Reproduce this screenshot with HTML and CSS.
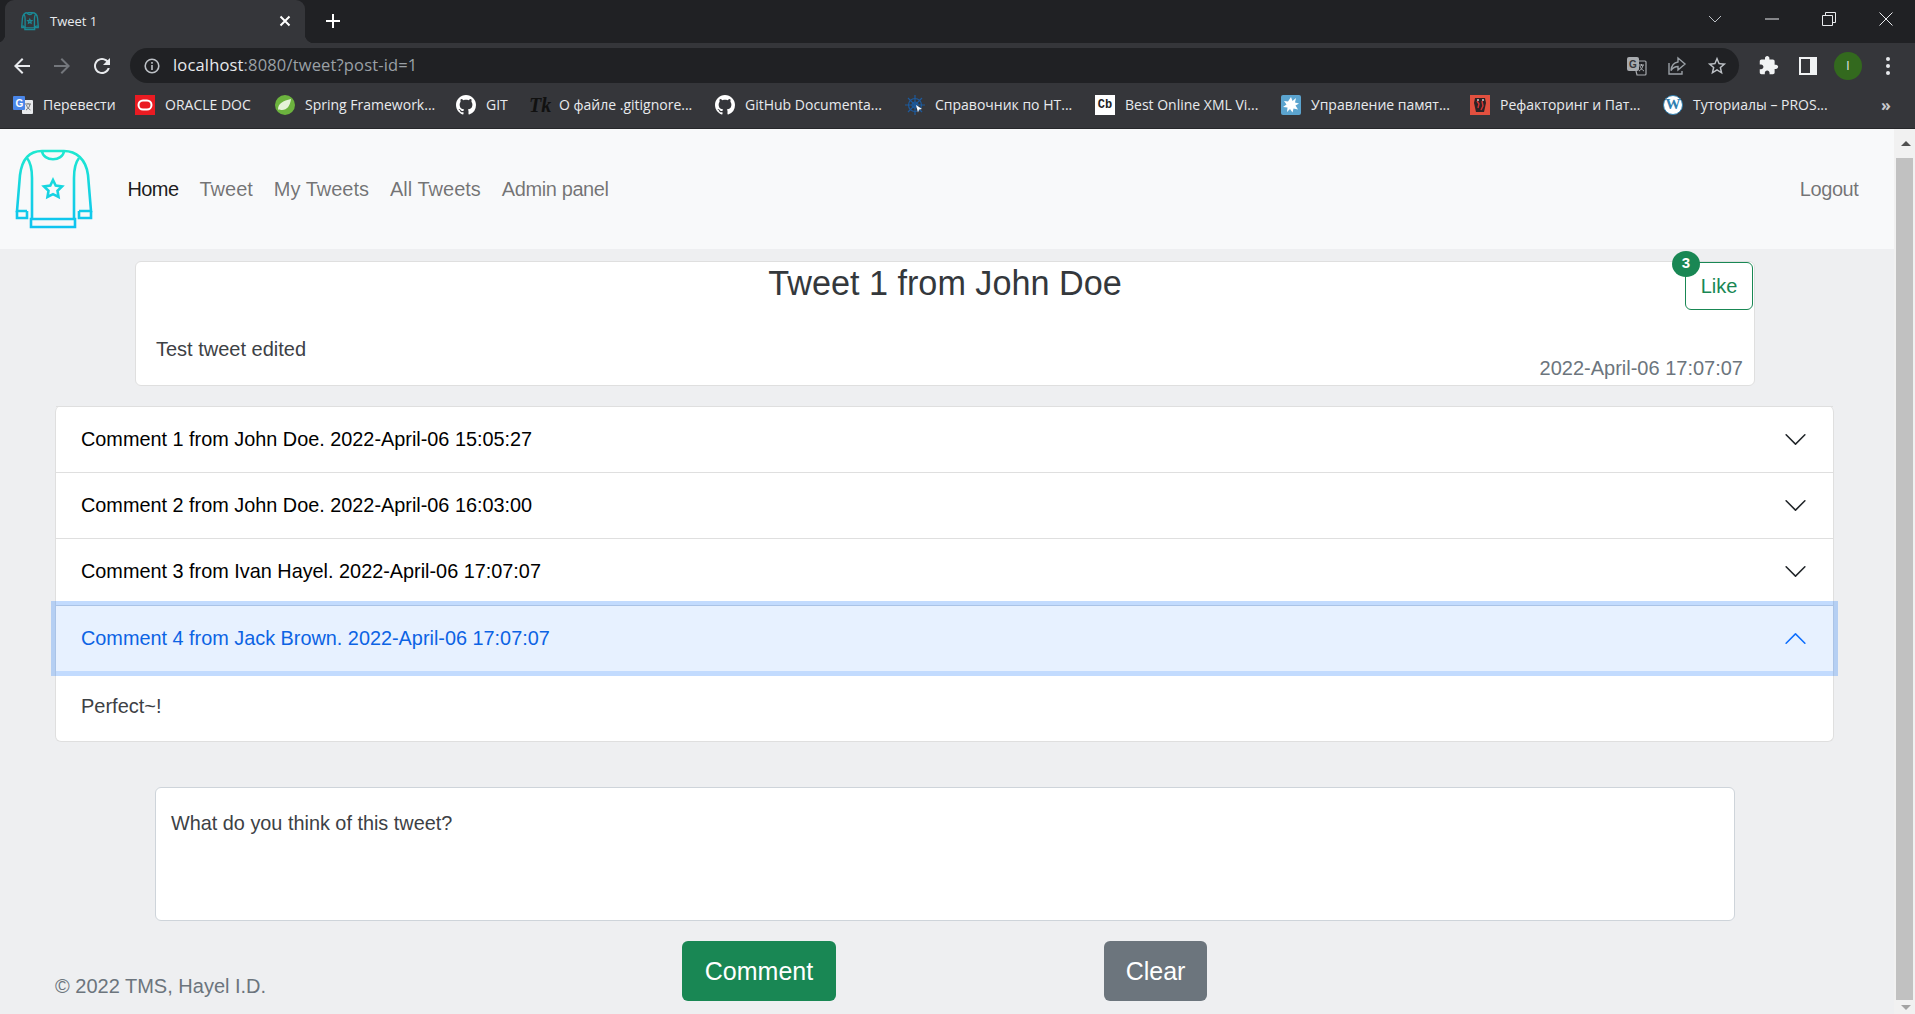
FILE: index.html
```html
<!DOCTYPE html>
<html lang="en">
<head>
    <meta charset="UTF-8">
    <title>Tweet 1</title>
    <link rel="stylesheet" href="styles.css">
</head>
<body>
    <svg class="defs" width="0" height="0">
        <symbol id="github" viewBox="0 0 16 16"><path fill="#fff" d="M8 0C3.58 0 0 3.58 0 8c0 3.54 2.29 6.53 5.47 7.59.4.07.55-.17.55-.38 0-.19-.01-.82-.01-1.49-2.01.37-2.53-.49-2.69-.94-.09-.23-.48-.94-.82-1.13-.28-.15-.68-.52-.01-.53.63-.01 1.08.58 1.23.82.72 1.21 1.87.87 2.33.66.07-.52.28-.87.51-1.07-1.78-.2-3.64-.89-3.64-3.95 0-.87.31-1.59.82-2.15-.08-.2-.36-1.02.08-2.12 0 0 .67-.21 2.2.82.64-.18 1.32-.27 2-.27.68 0 1.36.09 2 .27 1.53-1.04 2.2-.82 2.2-.82.44 1.1.16 1.92.08 2.12.51.56.82 1.27.82 2.15 0 3.07-1.87 3.75-3.65 3.95.29.25.54.73.54 1.48 0 1.07-.01 1.93-.01 2.2 0 .21.15.46.55.38A8.013 8.013 0 0016 8c0-4.42-3.58-8-8-8z"/></symbol>
        <symbol id="chevron" viewBox="0 0 16 16"><path fill-rule="evenodd" d="M1.646 4.646a.5.5 0 0 1 .708 0L8 10.293l5.646-5.647a.5.5 0 0 1 .708.708l-6 6a.5.5 0 0 1-.708 0l-6-6a.5.5 0 0 1 0-.708z"/></symbol>
        <symbol id="sweater" viewBox="0 0 90 90">
            <path d="M33 8h22c12 0 22 8 24 24l3 36H70"/>
            <path d="M33 8c-12 0-20 8-22 24L8 68h10"/>
            <path d="M33 8c1 11 21 11 22 0"/>
            <path d="M18 15c4 5 5 12 5 20v41M70 15c-4 5-5 12-5 20v41"/>
            <path d="M8 68v7h10v-7M70 68v7h12v-7"/>
            <path d="M22 76h44v8H22z"/>
            <path d="M44 37l2.700 5.600 6.300.9-4.500 4.300 1 6.200-5.500-2.900-5.500 2.900 1-6.200-4.500-4.300 6.300-.9z"/>
        </symbol>
        <linearGradient id="logoGrad" gradientUnits="userSpaceOnUse" x1="0" y1="8" x2="0" y2="84">
            <stop offset="0" stop-color="#1ee8d0"/>
            <stop offset="1" stop-color="#0fc3f0"/>
        </linearGradient>
    </svg>

    <!-- browser chrome -->
    <div class="tabstrip">
        <div class="tab">
            <svg class="favicon" width="20" height="20"><use href="#sweater"/></svg>
            <span class="tab-title">Tweet 1</span>
            <svg class="tab-close" width="12" height="12" viewBox="0 0 12 12" stroke="#fff" stroke-width="2"><path d="M1.5 1.5l9 9M10.500 1.5l-9 9"/></svg>
        </div>
        <svg class="new-tab" width="16" height="16" viewBox="0 0 16 16" stroke="#fff" stroke-width="2"><path d="M8 1v14M1 8h14"/></svg>
        <div class="win-controls">
            <span class="win-btn"><svg width="14" height="8" viewBox="0 0 14 8" fill="none" stroke="#bdc1c6"><path d="M1 1l6 6 6-6"/></svg></span>
            <span class="win-btn"><svg width="14" height="2" viewBox="0 0 14 2" stroke="#e8eaed"><path d="M0 1h14"/></svg></span>
            <span class="win-btn"><svg width="14" height="14" viewBox="0 0 14 14" fill="none" stroke="#e8eaed"><path d="M.5 3.5h10v10H.5zM3.5 3V.5h10v10H11"/></svg></span>
            <span class="win-btn"><svg width="14" height="14" viewBox="0 0 14 14" stroke="#e8eaed"><path d="M.5.5l13 13M13.500.5l-13 13"/></svg></span>
        </div>
    </div>

    <div class="toolbar">
        <span class="tool"><svg width="24" height="24" viewBox="0 0 24 24" fill="#e8eaed"><path d="M20 11H7.830l5.590-5.590L12 4l-8 8 8 8 1.410-1.410L7.830 13H20v-2z"/></svg></span>
        <span class="tool"><svg width="24" height="24" viewBox="0 0 24 24" fill="#74777c"><path d="M12 4l-1.410 1.410L16.170 11H4v2h12.170l-5.580 5.590L12 20l8-8z"/></svg></span>
        <span class="tool"><svg width="24" height="24" viewBox="0 0 24 24" fill="#e8eaed"><path d="M17.65 6.35C16.2 4.9 14.21 4 12 4c-4.42 0-7.99 3.58-7.99 8s3.57 8 7.99 8c3.73 0 6.84-2.55 7.73-6h-2.08c-.82 2.33-3.04 4-5.65 4-3.31 0-6-2.69-6-6s2.69-6 6-6c1.66 0 3.14.69 4.22 1.78L13 11h7V4l-2.35 2.35z"/></svg></span>
        <div class="omnibox">
            <svg class="omni-info" width="16" height="16" viewBox="0 0 16 16" fill="none" stroke="#bdc1c6" stroke-width="1.6"><circle cx="8" cy="8" r="6.8"/><path d="M8 7v5M8 4v1.8"/></svg>
            <span class="url">localhost<span class="url-rest">:8080/tweet?post-id=1</span></span>
            <span class="omni-actions">
                <span class="tool"><svg width="20" height="20" viewBox="0 0 20 20"><rect x="0" y="1" width="12" height="14" rx="2" fill="#a8abaf"/><path fill="none" stroke="#a8abaf" stroke-width="1.2" d="M12 5h6a1 1 0 0 1 1 1v12a1 1 0 0 1-1 1h-8l-1-4"/><text x="2" y="12" class="g-mark">G</text><path stroke="#a8abaf" fill="none" d="M12 9h5M14.5 8v2M16 9c-.5 3-2 5-4 6M13 10c.5 2 2 4 4 5"/></svg></span>
                <span class="tool"><svg width="20" height="20" viewBox="0 0 20 20" fill="none" stroke="#9aa0a6" stroke-width="1.4"><path d="M2 7v11h13v-3"/><path d="M11 2l7 6-7 6v-3.500c-3 0-5 1-7 4 .5-5 3-8 7-8.500z"/></svg></span>
                <span class="tool"><svg width="22" height="22" viewBox="0 0 24 24" fill="#bdc1c6"><path d="M22 9.24l-7.19-.62L12 2 9.19 8.63 2 9.24l5.46 4.73L5.82 21 12 17.27 18.18 21l-1.63-7.03L22 9.24zM12 15.4l-3.76 2.27 1-4.28-3.32-2.88 4.38-.38L12 6.1l1.71 4.04 4.38.38-3.32 2.88 1 4.28L12 15.4z"/></svg></span>
            </span>
        </div>
        <div class="tools-right">
            <span class="tool"><svg width="21" height="21" viewBox="0 0 24 24" fill="#f1f3f4"><path d="M20.5 11H19V7c0-1.1-.9-2-2-2h-4V3.5C13 2.12 11.88 1 10.5 1S8 2.12 8 3.5V5H4c-1.1 0-1.99.9-1.99 2v3.8H3.5c1.49 0 2.7 1.21 2.7 2.7s-1.21 2.7-2.7 2.7H2V20c0 1.1.9 2 2 2h3.8v-1.5c0-1.49 1.21-2.7 2.7-2.7 1.49 0 2.7 1.21 2.7 2.7V22H17c1.1 0 2-.9 2-2v-4h1.5c1.38 0 2.5-1.12 2.5-2.5S21.88 11 20.5 11z"/></svg></span>
            <span class="tool"><span class="side-panel"></span></span>
            <span class="tool"><span class="avatar">I</span></span>
            <span class="tool"><svg width="4" height="18" viewBox="0 0 4 18" fill="#e8eaed"><circle cx="2" cy="2" r="2"/><circle cx="2" cy="9" r="2"/><circle cx="2" cy="16" r="2"/></svg></span>
        </div>
    </div>

    <div class="bookmarks">
        <div class="bm"><svg width="20" height="20" viewBox="0 0 20 20"><rect x="9" y="5" width="11" height="14" rx="1" fill="#e8eaed"/><path d="M12 9h6M15 8v1M17 9c-.5 3-2 5-4 6M13.5 10c.5 2 2 4 4 5" fill="none" stroke="#777"/><rect x="0" y="1" width="12" height="14" rx="1" fill="#4a86e8"/><text x="2.5" y="12" class="g-mark g-white">G</text></svg><span>Перевести</span></div>
        <div class="bm"><svg width="20" height="20" viewBox="0 0 20 20"><rect width="20" height="20" fill="#ea1b22"/><rect x="3.5" y="5.5" width="13" height="9" rx="4.5" fill="none" stroke="#fff" stroke-width="2"/></svg><span>ORACLE DOC</span></div>
        <div class="bm"><svg width="20" height="20" viewBox="0 0 20 20"><circle cx="10" cy="10" r="10" fill="#6cb33e"/><path d="M3 15c0-7 5-9 13-11-1 7-4 11-9 11-2 0-3-1-4 0z" fill="#e6f2d8"/></svg><span>Spring Framework...</span></div>
        <div class="bm"><svg width="20" height="20"><use href="#github"/></svg><span>GIT</span></div>
        <div class="bm"><span class="tk-icon">Tk</span><span>О файле .gitignore...</span></div>
        <div class="bm"><svg width="20" height="20"><use href="#github"/></svg><span>GitHub Documenta...</span></div>
        <div class="bm"><svg width="20" height="20" viewBox="0 0 20 20" fill="none" stroke="#1d5a9c" stroke-width="1.2"><circle cx="10" cy="10" r="3"/><circle cx="10" cy="10" r="6.5"/><path d="M10 0v20M0 10h20M3 3l14 14M17 3L3 17"/><path d="M11 10l6 4-3 .5-1 3z" fill="#fff" stroke="none"/></svg><span>Справочник по HT...</span></div>
        <div class="bm"><span class="cb-icon">Cb</span><span>Best Online XML Vi...</span></div>
        <div class="bm"><svg width="20" height="20" viewBox="0 0 20 20"><rect width="20" height="20" rx="2" fill="#5ba4cf"/><path d="M10 2l1.500 4L15 3l-1 4.500 4 1-3.500 2 2.500 4-4.500-1-1 4-2.500-3.500L6 17l.5-4.500L2 12l3.500-2.500L3 6l4 .5z" fill="#fff"/></svg><span>Управление памят...</span></div>
        <div class="bm"><svg width="20" height="20" viewBox="0 0 20 20"><rect width="20" height="20" fill="#e2503f"/><path d="M5 3h10l1 5-2 9H6L4 8z" fill="#2b2326"/><path d="M7 6l2 3-1 4M12 6l1 5-2 4" stroke="#c33" fill="none" stroke-width="1.5"/><circle cx="8" cy="5" r="1" fill="#ccc"/><circle cx="13" cy="5" r="1" fill="#ccc"/></svg><span>Рефакторинг и Пат...</span></div>
        <div class="bm"><span class="wp-icon">W</span><span>Туториалы – PROS...</span></div>
        <div class="bm-more">»</div>
    </div>

    <!-- page -->
    <div class="viewport">
        <div class="page">
            <nav class="navbar">
                <svg class="logo" width="90" height="90"><use href="#sweater"/></svg>
                <a class="nav-link active" href="#">Home</a>
                <a class="nav-link" href="#">Tweet</a>
                <a class="nav-link" href="#">My Tweets</a>
                <a class="nav-link" href="#">All Tweets</a>
                <a class="nav-link tight" href="#">Admin panel</a>
                <a class="nav-link tight logout" href="#">Logout</a>
            </nav>

            <section class="tweet">
                <div class="tweet-head">
                    <span></span>
                    <h3 class="tweet-title">Tweet 1 from John Doe</h3>
                    <button class="btn-like">Like<span class="badge">3</span></button>
                </div>
                <div class="tweet-foot">
                    <p class="tweet-text">Test tweet edited</p>
                    <span class="tweet-date">2022-April-06 17:07:07</span>
                </div>
            </section>

            <div class="accordion">
                <div class="acc-item">
                    <div class="acc-btn"><span class="acc-label">Comment 1 from John Doe. 2022-April-06 15:05:27</span><svg width="25" height="25"><use href="#chevron"/></svg></div>
                </div>
                <div class="acc-item">
                    <div class="acc-btn"><span class="acc-label">Comment 2 from John Doe. 2022-April-06 16:03:00</span><svg width="25" height="25"><use href="#chevron"/></svg></div>
                </div>
                <div class="acc-item">
                    <div class="acc-btn"><span class="acc-label">Comment 3 from Ivan Hayel. 2022-April-06 17:07:07</span><svg width="25" height="25"><use href="#chevron"/></svg></div>
                </div>
                <div class="acc-item acc-item-open">
                    <div class="acc-btn open"><span class="acc-label">Comment 4 from Jack Brown. 2022-April-06 17:07:07</span><svg width="25" height="25"><use href="#chevron"/></svg></div>
                    <div class="acc-body">Perfect~!</div>
                </div>
            </div>

            <textarea class="comment-box">What do you think of this tweet?</textarea>

            <div class="bottom-row">
                <span class="copyright">© 2022 TMS, Hayel I.D.</span>
                <button class="btn btn-green">Comment</button>
                <button class="btn btn-grey">Clear</button>
            </div>
        </div>

        <div class="scrollbar">
            <div class="sb-arrow"><span class="arrow-up"></span></div>
            <div class="sb-thumb"></div>
            <div class="sb-arrow"><span class="arrow-down"></span></div>
        </div>
    </div>
</body>
</html>
```

FILE: styles.css
```css
* {
    box-sizing: border-box;
}

html, body {
    height: 100%;
}

body {
    margin: 0;
    display: flex;
    flex-direction: column;
    overflow: hidden;
    font-family: "Liberation Sans", Arial, sans-serif;
    font-size: 20px;
    line-height: 30px;
    color: #212529;
    background-color: #eeeff1;
}

.defs {
    position: absolute;
}

/* browser chrome */
.tabstrip {
    height: 43px;
    flex: none;
    display: flex;
    align-items: center;
    background-color: #202124;
    font-family: "Open Sans", sans-serif;
}

.tab {
    position: relative;
    width: 300px;
    height: 43px;
    margin-left: 5px;
    padding: 0 0 2px 15px;
    display: flex;
    align-items: center;
    background-color: #35363a;
    border-radius: 9px 9px 0 0;
}

.tab::before,
.tab::after {
    content: "";
    position: absolute;
    bottom: 0;
    width: 9px;
    height: 9px;
}

.tab::before {
    left: -9px;
    background: radial-gradient(circle at 0 0, transparent 9px, #35363a 9.5px);
}

.tab::after {
    right: -9px;
    background: radial-gradient(circle at 100% 0, transparent 9px, #35363a 9.5px);
}

.favicon {
    flex: none;
    fill: none;
    stroke: #1b8a96;
    stroke-width: 6;
}

.tab-title {
    margin-left: 10px;
    font-size: 13px;
    line-height: 20px;
    color: #e8eaed;
}

.tab-close {
    margin-left: auto;
    margin-right: 14px;
}

.new-tab {
    margin: 0 0 2px 20px;
}

.win-controls {
    margin-left: auto;
    margin-right: 1px;
    align-self: flex-start;
    display: flex;
}

.win-btn {
    width: 57px;
    height: 38px;
    display: flex;
    align-items: center;
    justify-content: center;
}

.toolbar {
    height: 40px;
    flex: none;
    padding: 5px 0 0 2px;
    display: flex;
    background-color: #35363a;
}

.tool {
    width: 40px;
    height: 35px;
    display: flex;
    align-items: center;
    justify-content: center;
}

.omnibox {
    width: 1609px;
    height: 35px;
    margin-left: 8px;
    padding: 0 2px 0 14px;
    display: flex;
    align-items: center;
    background-color: #202124;
    border-radius: 18px;
}

.omni-info {
    flex: none;
}

.url {
    margin: 0 0 2px 13px;
    font-family: "Open Sans", sans-serif;
    font-size: 16.500px;
    letter-spacing: 0.16px;
    color: #e8eaed;
}

.url-rest {
    color: #9aa0a6;
}

.omni-actions {
    margin-left: auto;
    display: flex;
}

.g-mark {
    font-family: "Liberation Sans", sans-serif;
    font-size: 10px;
    font-weight: bold;
    fill: #35363a;
}

.g-white {
    fill: #fff;
}

.tools-right {
    margin-left: 9px;
    display: flex;
}

.side-panel {
    width: 18px;
    height: 18px;
    border: 2px solid #f1f3f4;
    border-right-width: 7px;
}

.avatar {
    width: 28px;
    height: 28px;
    border-radius: 50%;
    background-color: #33691e;
    color: #e8eaed;
    font-family: "Open Sans", sans-serif;
    font-size: 12px;
    line-height: 28px;
    text-align: center;
}

.bookmarks {
    height: 46px;
    flex: none;
    padding: 0 0 1px 13px;
    display: grid;
    grid-template-columns: 122px 140px 181px 73px 186px 190px 190px 186px 189px 193px 223px auto;
    align-items: center;
    background-color: #35363a;
    border-bottom: 1px solid #26272a;
    font-family: "Open Sans", sans-serif;
    font-size: 14px;
    line-height: 20px;
    color: #e8eaed;
    white-space: nowrap;
}

.bm {
    display: flex;
    align-items: center;
    gap: 10px;
}

.bm svg {
    flex: none;
}

.tk-icon {
    width: 20px;
    font-family: "Liberation Serif", serif;
    font-size: 20px;
    font-style: italic;
    font-weight: bold;
    color: #111;
}

.cb-icon {
    width: 20px;
    height: 20px;
    background-color: #fff;
    color: #222;
    font-family: "Liberation Mono", monospace;
    font-size: 12px;
    font-weight: bold;
    text-align: center;
}

.wp-icon {
    width: 20px;
    height: 20px;
    border-radius: 50%;
    border: 1.5px solid #2f7fb0;
    background-color: #fff;
    color: #2f7fb0;
    font-family: "Liberation Serif", serif;
    font-size: 15px;
    font-weight: bold;
    line-height: 17px;
    text-align: center;
}

.bm-more {
    margin-left: -5px;
    font-size: 16px;
    font-weight: bold;
    color: #c8cacd;
}

/* page */
.viewport {
    flex: 1;
    min-height: 0;
    display: flex;
}

.page {
    flex: 1;
    min-width: 0;
}

.navbar {
    height: 120px;
    padding: 0 25px 0 9px;
    display: flex;
    align-items: center;
    background-color: #f8f9fa;
}

.logo {
    margin-right: 18px;
    margin-top: -2px;
    flex: none;
    fill: none;
    stroke: url(#logoGrad);
    stroke-width: 2.6;
}

.nav-link {
    padding: 0 10.500px;
    color: rgba(0, 0, 0, 0.55);
    text-decoration: none;
}

.nav-link.active {
    color: rgba(0, 0, 0, 0.9);
    letter-spacing: -0.6px;
}

.nav-link.tight {
    letter-spacing: -0.4px;
}

.logout {
    margin-left: auto;
}

.tweet {
    width: 1620px;
    margin: 12px 0 0 135px;
    background-color: #fff;
    border: 1px solid #dfdfdf;
    border-radius: 6px;
}

.tweet-head {
    display: grid;
    grid-template-columns: 1fr auto 1fr;
}

.tweet-title {
    margin: 0;
    color: #34383c;
    font-size: 34.200px;
    font-weight: normal;
    line-height: 42px;
}

.btn-like {
    position: relative;
    justify-self: end;
    width: 68px;
    height: 48px;
    margin-right: 1px;
    padding: 0;
    background-color: #fff;
    border: 1px solid #198754;
    border-radius: 6px;
    color: #198754;
    font: inherit;
}

.badge {
    position: absolute;
    top: -12px;
    left: -14px;
    width: 28px;
    height: 26px;
    border-radius: 50%;
    background-color: #198754;
    color: #fff;
    font-size: 15px;
    font-weight: bold;
    line-height: 24px;
}

.tweet-foot {
    margin-top: 24px;
    padding: 0 11px 2px 20px;
    display: flex;
    justify-content: space-between;
}

.tweet-text {
    margin: 0;
    color: #3d4145;
}

.tweet-date {
    margin-top: 19px;
    color: #6c757d;
}

.accordion {
    width: 1779px;
    margin: 20px 0 0 55px;
    background-color: #fff;
    border: 1px solid #dfdfdf;
    border-top: 0;
    border-radius: 6px;
}

.acc-item {
    border-top: 1px solid #dfdfdf;
}

.acc-item-open {
    margin-top: 1px;
}

.acc-btn {
    height: 65px;
    padding: 0 25px;
    display: flex;
    align-items: center;
    justify-content: space-between;
    color: #000;
    font-size: 19.850px;
}

.acc-label {
    margin-bottom: 2px;
}

.acc-btn svg {
    fill: #212529;
}

.acc-btn.open {
    position: relative;
    background-color: #e7f1ff;
    color: #0c63e4;
    box-shadow: 0 0 0 5px rgba(13, 110, 253, 0.25);
}

.acc-btn.open svg {
    fill: #0d6efd;
    transform: rotate(180deg);
}

.acc-body {
    height: 70px;
    padding: 20px 25px;
    color: #3d4145;
}

.comment-box {
    display: block;
    width: 1580px;
    height: 134px;
    margin: 45px 0 0 155px;
    padding: 20px 15px 7px;
    border: 1px solid #ced4da;
    border-radius: 6px;
    background-color: #fff;
    color: #3d4145;
    font: inherit;
    font-size: 19.850px;
    resize: none;
}

.bottom-row {
    margin-top: 20px;
    padding-left: 55px;
    display: flex;
    align-items: flex-end;
}

.copyright {
    width: 627px;
    color: #6c757d;
}

.btn {
    height: 60px;
    padding: 0;
    border: none;
    border-radius: 6px;
    color: #fff;
    font-family: inherit;
    font-size: 25px;
}

.btn-green {
    width: 154px;
    margin-right: 268px;
    background-color: #198754;
}

.btn-grey {
    width: 103px;
    background-color: #6c757d;
}

.scrollbar {
    width: 21px;
    flex: none;
    padding-left: 2px;
    display: flex;
    flex-direction: column;
    background-color: #f1f1f1;
}

.sb-arrow {
    height: 29px;
    flex: none;
    display: flex;
    align-items: center;
    justify-content: center;
}

.sb-arrow:last-child {
    height: 14px;
}

.sb-thumb {
    flex: 1;
    width: 17px;
    background-color: #c1c1c1;
}

.arrow-up {
    border-left: 5px solid transparent;
    border-right: 5px solid transparent;
    border-bottom: 5px solid #505050;
}

.arrow-down {
    border-left: 5px solid transparent;
    border-right: 5px solid transparent;
    border-top: 5px solid #a3a3a3;
}
```
